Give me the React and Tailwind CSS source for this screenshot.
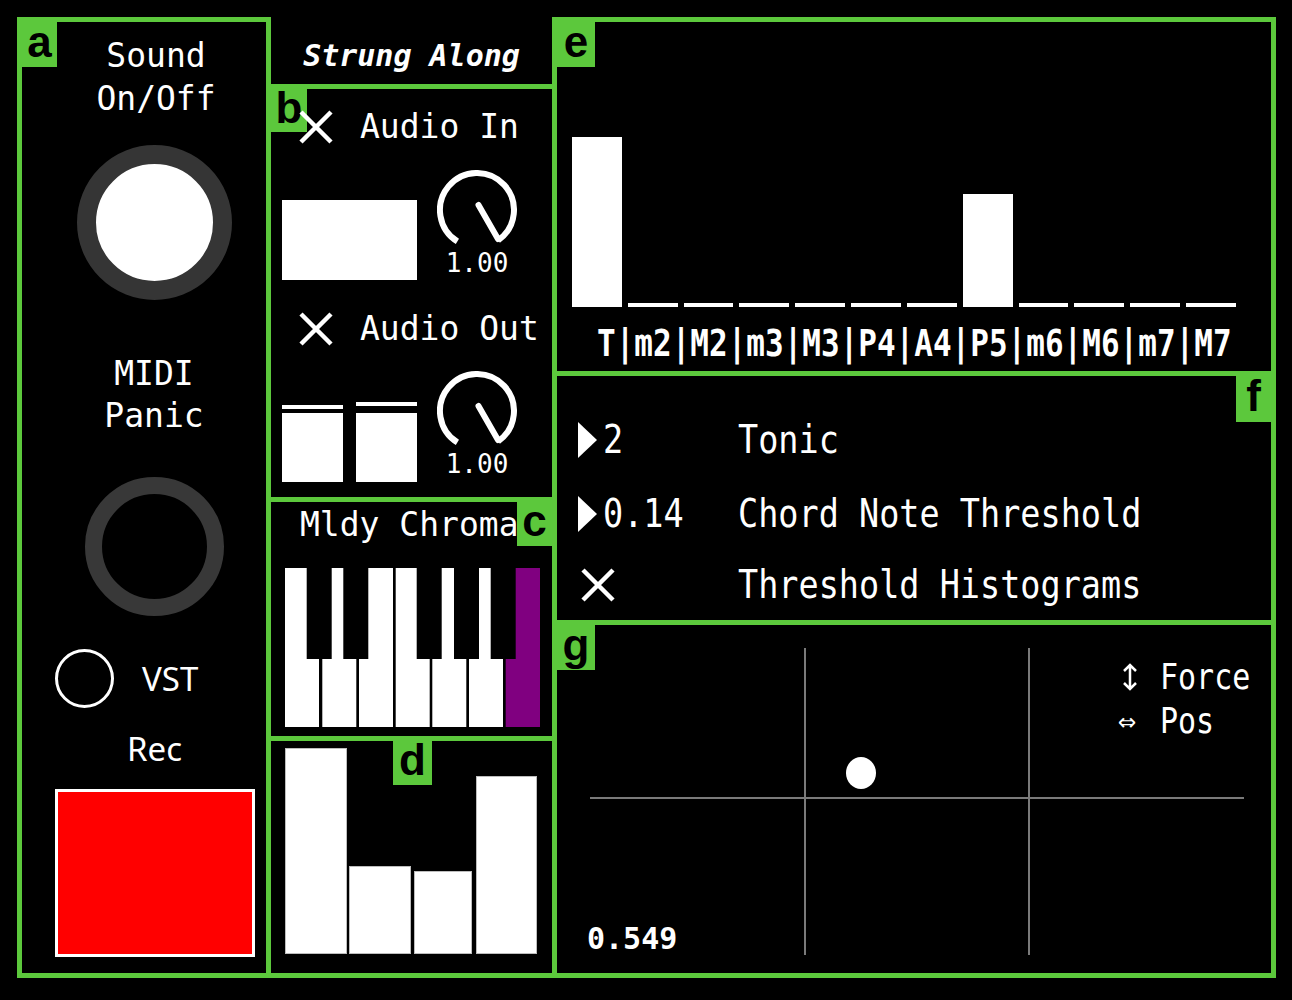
import React from 'react'

const MONO = "font-['DejaVu_Sans_Mono',monospace]"

function Tag({ letter, className = '' }) {
  return (
    <div
      className={`absolute flex items-center justify-center bg-[#5cc83c] text-black font-['Liberation_Sans',sans-serif] font-bold text-[44px] leading-none pb-[6px] ${className}`}
    >
      {letter}
    </div>
  )
}

function Cross({ size = 36 }) {
  return (
    <svg width={size} height={size} viewBox="0 0 36 36">
      <path d="M3 3 L33 33 M33 3 L3 33" stroke="#fff" strokeWidth="4.5" fill="none" />
    </svg>
  )
}

function Knob({ value }) {
  return (
    <div className="ml-[20px] flex w-[80px] flex-col items-center">
      <svg width="80" height="80" viewBox="0 0 80 80">
        <path d="M20.4 71.4 A37 37 0 1 1 61.2 70.3" stroke="#fff" strokeWidth="6" fill="none" />
        <path d="M41.5 35 L61 69" stroke="#fff" strokeWidth="6" strokeLinecap="round" />
      </svg>
      <div className={`${MONO} text-[26px] leading-[26px]`}>{value}</div>
    </div>
  )
}

function PanelA() {
  return (
    <div className="relative flex h-[961px] w-[254px] shrink-0 flex-col items-center border-[5px] border-[#5cc83c] pl-[24px]">
      <Tag letter="a" className="left-0 top-0 h-[45px] w-[35px]" />
      <div className={`${MONO} mt-[12px] text-center text-[33px] leading-[43px]`}>
        <div>Sound</div>
        <div>On/Off</div>
      </div>
      <div className="ml-[-3px] mt-[25px] h-[155px] w-[155px] rounded-full border-[19px] border-[#353535] bg-white" />
      <div className={`${MONO} ml-[-4px] mt-[53px] text-center text-[33px] leading-[42px]`}>
        <div>MIDI</div>
        <div>Panic</div>
      </div>
      <div className="ml-[-3px] mt-[40px] h-[139px] w-[139px] rounded-full border-[17px] border-[#383838]" />
      <div className="mt-[33px] ml-[9px] flex items-center self-start">
        <div className="h-[59px] w-[59px] rounded-full border-[3px] border-white" />
        <span className="ml-[28px] font-['Noto_Sans',sans-serif] text-[33px] leading-[40px]">VST</span>
      </div>
      <div className="ml-[-3px] mt-[21px] font-['Noto_Sans',sans-serif] text-[33px] leading-[40px]">Rec</div>
      <div className="ml-[-3px] mt-[20px] h-[168px] w-[200px] border-[3px] border-white bg-[#ff0000]" />
    </div>
  )
}

function PanelB() {
  return (
    <div className="relative h-[418px] border-[5px] border-[#5cc83c]">
      <Tag letter="b" className="left-0 top-0 h-[43px] w-[36px]" />
      <div className="relative mt-[20px] flex h-[36px] items-center pl-[27px]">
        <Cross />
        <span className={`${MONO} ml-[26px] text-[33px] leading-[36px]`}>Audio In</span>
      </div>
      <div className="mt-[25px] flex items-start">
        <div className="ml-[11px] mt-[30px] h-[80px] w-[135px] bg-white" />
        <Knob value="1.00" />
      </div>
      <div className="relative mt-[31px] flex h-[36px] items-center pl-[27px]">
        <Cross />
        <span className={`${MONO} ml-[26px] text-[33px] leading-[36px]`}>Audio Out</span>
      </div>
      <div className="mt-[24px] flex items-start">
        <div className="ml-[11px] mt-[31px] flex gap-[13px]">
          <div className="flex w-[61px] flex-col">
            <div className="mt-[3px] h-[4px] bg-white" />
            <div className="mt-[4px] h-[69px] bg-white" />
          </div>
          <div className="flex w-[61px] flex-col">
            <div className="h-[4px] bg-white" />
            <div className="mt-[7px] h-[69px] bg-white" />
          </div>
        </div>
        <Knob value="1.00" />
      </div>
    </div>
  )
}

const WHITE_KEYS = [0, 37.3, 74, 110.7, 147.3, 184]
const BLACK_KEYS = [21.7, 58.3, 131.7, 169, 205.7]

function PanelC() {
  return (
    <div className="relative -mt-[5px] h-[244px] border-[5px] border-[#5cc83c]">
      <div className={`${MONO} mt-[5px] pl-[29px] text-[33px] leading-[36px] whitespace-nowrap`}>Mldy Chroma</div>
      <svg className="ml-[14px] mt-[25px]" width="255" height="159" viewBox="0 0 255 159">
        {WHITE_KEYS.map((x) => (
          <rect key={x} x={x} y="0" width="34" height="159" fill="#fff" />
        ))}
        <rect x="220.7" y="0" width="34.3" height="159" fill="#800080" />
        {BLACK_KEYS.map((x) => (
          <rect key={x} x={x} y="0" width="25" height="91" fill="#000" />
        ))}
      </svg>
      <Tag letter="c" className="right-0 top-0 h-[44px] w-[35px]" />
    </div>
  )
}

function PanelD() {
  return (
    <div className="relative -mt-[5px] h-[242px] border-[5px] border-[#5cc83c]">
      <div className="ml-[14px] mt-[7px] flex h-[206px] items-end">
        <div className="h-[206px] w-[62px] border border-[#bdbdbd] bg-white" />
        <div className="ml-[2px] h-[88px] w-[62px] border border-[#bdbdbd] bg-white" />
        <div className="ml-[3px] h-[83px] w-[58px] border border-[#bdbdbd] bg-white" />
        <div className="ml-[4px] h-[178px] w-[61px] border border-[#bdbdbd] bg-white" />
      </div>
      <Tag letter="d" className="left-[122px] top-0 h-[44px] w-[39px]" />
    </div>
  )
}

const INTERVALS = [170, 4, 4, 4, 4, 4, 4, 113, 4, 4, 4, 4]

function PanelE() {
  return (
    <div className="relative h-[359px] border-[5px] border-[#5cc83c]">
      <Tag letter="e" className="left-0 top-0 h-[45px] w-[38px]" />
      <div className="ml-[15px] mt-[115px] flex h-[170px] w-[664px] items-end gap-[6px]">
        {INTERVALS.map((h, i) => (
          <div key={i} className="flex-1 bg-white" style={{ height: `${h}px` }} />
        ))}
      </div>
      <div className="ml-[40px] mt-[18px] h-[36px]">
        <span className={`${MONO} inline-block scale-y-[1.2] text-[31px] font-bold leading-[36px] whitespace-nowrap`}>
          T|m2|M2|m3|M3|P4|A4|P5|m6|M6|m7|M7
        </span>
      </div>
    </div>
  )
}

function Triangle() {
  return (
    <svg width="19" height="36" viewBox="0 0 19 36">
      <polygon points="0,0 19,18 0,36" fill="#fff" />
    </svg>
  )
}

function SettingRow({ icon, value, label, className }) {
  return (
    <div className={`flex h-[40px] items-center pl-[21px] ${className}`}>
      <div className="flex w-[160px] items-center">
        {icon}
        {value ? (
          <span className={`${MONO} ml-[6px] inline-block scale-y-[1.15] text-[33.5px] leading-[40px]`}>{value}</span>
        ) : null}
      </div>
      <span className={`${MONO} inline-block scale-y-[1.15] text-[33.5px] leading-[40px] whitespace-nowrap`}>{label}</span>
    </div>
  )
}

function PanelF() {
  return (
    <div className="relative -mt-[5px] h-[254px] border-[5px] border-[#5cc83c]">
      <SettingRow className="mt-[44px]" icon={<Triangle />} value="2" label="Tonic" />
      <SettingRow className="mt-[34px]" icon={<Triangle />} value="0.14" label="Chord Note Threshold" />
      <SettingRow
        className="mt-[31px]"
        icon={
          <div className="ml-[2px]">
            <Cross />
          </div>
        }
        label="Threshold Histograms"
      />
      <Tag letter="f" className="right-0 top-0 h-[46px] w-[35px]" />
    </div>
  )
}

function UpDownArrow() {
  return (
    <svg width="18" height="28" viewBox="0 0 18 28">
      <path d="M9 2 L9 26 M3 8 L9 2 L15 8 M3 20 L9 26 L15 20" stroke="#fff" strokeWidth="2.5" fill="none" />
    </svg>
  )
}

function PanelG() {
  return (
    <div className="relative -mt-[5px] h-[358px] border-[5px] border-[#5cc83c]">
      <svg className="absolute inset-0" width="714" height="348" viewBox="0 0 714 348">
        <line x1="248" y1="23" x2="248" y2="330" stroke="#7a7a7a" strokeWidth="2" />
        <line x1="472" y1="23" x2="472" y2="330" stroke="#7a7a7a" strokeWidth="2" />
        <line x1="33" y1="173" x2="687" y2="173" stroke="#7a7a7a" strokeWidth="2" />
        <ellipse cx="304" cy="148" rx="15" ry="16" fill="#fff" />
      </svg>
      <Tag letter="g" className="left-0 top-0 h-[45px] w-[38px]" />
      <div className={`${MONO} absolute left-[564px] top-[30px] text-[30px] leading-[44px]`}>
        <div className="flex items-center">
          <span className="w-[39px]">
            <UpDownArrow />
          </span>
          <span className="inline-block scale-y-[1.2]">Force</span>
        </div>
        <div className="flex items-center">
          <span className="-ml-[3px] w-[42px] text-[30px] leading-[44px]">⇔</span>
          <span className="inline-block scale-y-[1.2]">Pos</span>
        </div>
      </div>
      <div className={`${MONO} absolute left-[30px] top-[296px] text-[30px] font-bold leading-[36px]`}>0.549</div>
    </div>
  )
}

export default function App() {
  return (
    <div className="min-h-[1000px] w-[1292px] bg-black pl-[17px] pt-[17px] text-white">
      <div className="flex">
        <PanelA />
        <div className="-ml-[5px] flex w-[291px] shrink-0 flex-col">
          <div className="flex h-[67px] items-center justify-center pt-[10px]">
            <span className={`${MONO} text-[30px] font-bold italic leading-[36px] whitespace-nowrap`}>Strung Along</span>
          </div>
          <PanelB />
          <PanelC />
          <PanelD />
        </div>
        <div className="-ml-[5px] flex w-[724px] shrink-0 flex-col">
          <PanelE />
          <PanelF />
          <PanelG />
        </div>
      </div>
    </div>
  )
}
